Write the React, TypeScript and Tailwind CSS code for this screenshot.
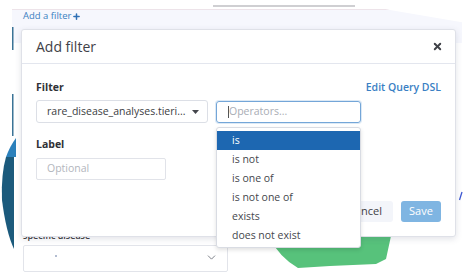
import { X, Plus, ChevronDown } from 'lucide-react';

const operators = ['is', 'is not', 'is one of', 'is not one of', 'exists', 'does not exist'];

export default function App() {
  return (
    <div className="relative flex h-[272px] w-[468px] flex-col overflow-hidden bg-white font-['Open_Sans',sans-serif] text-[#343741]">
      {/* page behind the modal */}
      <div className="h-[10px] pl-[213px] pt-[5px]">
        <div className="h-[2px] w-[142px] bg-[#cfcfd2]" />
      </div>
      <div className="ml-[12px] h-[40px] w-[450px] border-t border-[#eadbe2] bg-[#f6f7fd] pl-[11px] [clip-path:polygon(0_0,83%_0,100%_38%,100%_100%,0_100%)]">
        <div className="flex items-center gap-[1px] text-[9.5px] leading-[12px] text-[#3a7fc1]">
          Add a filter
          <Plus size={9} strokeWidth={4} className="text-[#2f6fb5]" />
        </div>
      </div>
      <div className="ml-[23px] mt-[187px] text-[9px] font-semibold leading-[12px] text-[#3b3b3b]">specific disease</div>
      <div className="ml-[23px] mt-[3px] flex h-[30px] w-[205px] items-start justify-between rounded-[2px] border border-[#e2e4ea] pl-[31px] pr-[9px] pt-[5px]">
        <div className="mt-[4px] h-[2px] w-[2px] rounded-full bg-[#9aa7c2]" />
        <ChevronDown size={13} strokeWidth={1.6} className="text-[#6b6f78]" />
      </div>

      {/* chart pieces */}
      <svg className="absolute left-0 top-0" width="468" height="272">
        <path d="M14,157 L14,249 Q6,232 2,200 Q1,174 6,157 Z" fill="#1b5a7c" />
        <path d="M6,157 Q10,146 16,138 L16,157 Z" fill="#2b80bb" />
        <rect x="12" y="27" width="1.5" height="23" fill="#3a7396" />
        <rect x="12" y="94" width="1.5" height="42" fill="#3a7396" />
        <path d="M268,236 L391,236 L386,259 L376,264 L330,266 L298,268 Q280,258 268,236 Z" fill="#57c27b" />
        <path d="M462,192 L459.5,200" stroke="#3d58d3" strokeWidth="1.3" />
      </svg>

      {/* modal */}
      <div className="absolute left-[21px] top-[29px] flex h-[208px] w-[435px] flex-col rounded-[3px] border border-[#dfe1e8] bg-white shadow-[0_2px_6px_rgba(60,70,100,0.15)]">
        <div className="flex h-[34px] shrink-0 items-center justify-between border-b border-[#e3e6ee] pl-[14px] pr-[12px]">
          <span className="text-[14px] leading-[18px] text-[#3f4147]">Add filter</span>
          <X size={11} strokeWidth={4.2} className="text-[#3f4147]" />
        </div>
        <div className="flex flex-1 flex-col px-[14px] pb-[14px] pt-[17px]">
          <div className="flex h-[13px] items-center justify-between">
            <span className="text-[10.5px] font-bold text-[#2f3136]">Filter</span>
            <span className="text-[10.5px] font-semibold text-[#3a80c4]">Edit Query DSL</span>
          </div>
          <div className="mt-[6px] flex items-start gap-[8px]">
            <div className="flex h-[23px] w-[172px] items-center justify-between rounded-[3px] border border-[#dcdfe6] pl-[10px] pr-[8px]">
              <span className="text-[10.5px] text-[#3b3d42]">rare_disease_analyses.tieri...</span>
              <svg width="7" height="4" viewBox="0 0 7 4">
                <path d="M0,0 L7,0 L3.5,4 Z" fill="#44464c" />
              </svg>
            </div>
            <div className="relative mt-[1px] w-[145px]">
              <div className="flex h-[22px] items-center rounded-[3px] border border-[#74a6d8] pl-[11px] shadow-[0_0_0_1px_rgba(116,166,216,0.25)]">
                <span className="h-[12px] w-px bg-[#555]" />
                <span className="text-[10.5px] text-[#a9adb5]">Operators...</span>
              </div>
              <div className="absolute left-0 top-[26px] z-10 w-[145px] rounded-[3px] border border-[#d9dce3] bg-white pb-[2px] pt-[3px] shadow-[0_2px_4px_rgba(0,0,0,0.12)]">
                {operators.map((op, i) => (
                  <div
                    key={op}
                    className={
                      i === 0
                        ? 'flex h-[19px] items-center bg-[#1d67b1] pl-[15px] text-[10.5px] text-white'
                        : 'flex h-[19px] items-center pl-[15px] text-[10.5px] text-[#45474d]'
                    }
                  >
                    {op}
                  </div>
                ))}
              </div>
            </div>
          </div>
          <div className="mt-[15px] h-[13px] text-[10.5px] font-bold leading-[13px] text-[#2f3136]">Label</div>
          <div className="mt-[7px] flex h-[22px] w-[130px] items-center rounded-[2px] border border-[#e1e3e9] pl-[10px] text-[10.5px] text-[#b3b6bd]">
            Optional
          </div>
          <div className="mt-auto flex justify-end gap-[8px]">
            <div className="flex h-[21px] items-center rounded-[3px] bg-[#f3f5fa] px-[11px] text-[11px] text-[#3f4147]">Cancel</div>
            <div className="flex h-[21px] w-[40px] items-center justify-center rounded-[3px] bg-[#7fb5e2] text-[11px] text-white">Save</div>
          </div>
        </div>
      </div>
    </div>
  );
}
